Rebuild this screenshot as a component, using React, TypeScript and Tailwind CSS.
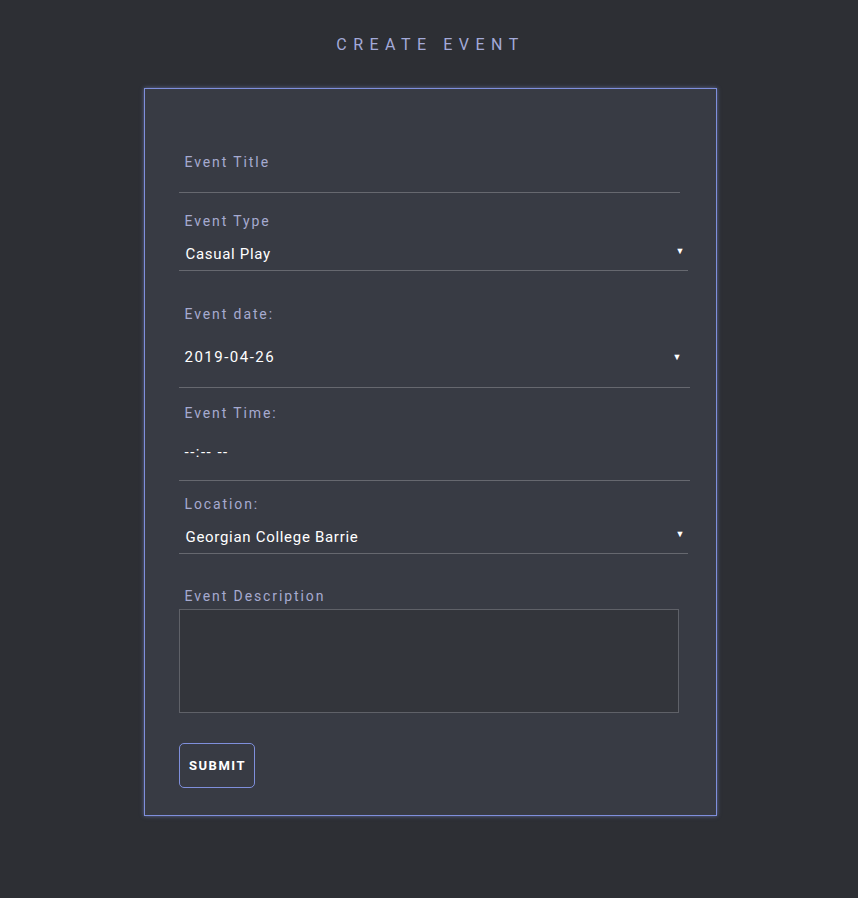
import React from 'react';

const Arrow = ({ className = '' }: { className?: string }) => (
  <span className={`text-[9px] leading-none text-white ${className}`}>▼</span>
);

export default function App() {
  return (
    <div className="min-h-[898px] w-full bg-[#2d2f34] font-['Roboto','Liberation_Sans',sans-serif]">
      <div className="flex flex-col items-center pt-[35px]">
        <h1 className="h-[20px] pl-[3px] text-[16px] leading-[20px] tracking-[6.5px] text-[#a3aad9]">CREATE EVENT</h1>

        <form className="ml-[2px] mt-[33px] w-[573px] border border-[#7f8fdc] bg-[#383b44] pb-[27px] pl-[34px] pr-[26px] pt-[63px] shadow-[0_0_4px_rgba(127,143,220,0.6)]">
          {/* Event Title */}
          <label className="block h-[20px] pl-[6px] text-[14px] leading-[20px] tracking-[1.9px] text-[#a6aad0]">Event Title</label>
          <div className="h-[21px] w-[501px] border-b border-[#66686f]" />

          {/* Event Type */}
          <label className="mt-[18px] block h-[20px] pl-[6px] text-[14px] leading-[20px] tracking-[1.9px] text-[#a6aad0]">Event Type</label>
          <div className="flex h-[40px] w-[509px] items-start justify-between border-b border-[#66686f] pl-[7px] pr-[3px] pt-[13px]">
            <span className="text-[15px] leading-[20px] tracking-[0.7px] text-white">Casual Play</span>
            <Arrow className="mt-[3px]" />
          </div>

          {/* Event date */}
          <label className="mt-[33px] block h-[20px] pl-[6px] text-[14px] leading-[20px] tracking-[1.9px] text-[#a6aad0]">Event date:</label>
          <div className="flex h-[64px] w-[511px] items-start justify-between border-b border-[#66686f] pl-[6px] pr-[8px] pt-[23px]">
            <span className="text-[15px] leading-[20px] tracking-[1.5px] text-white">2019-04-26</span>
            <Arrow className="mt-[6px] text-[8px]" />
          </div>

          {/* Event Time */}
          <label className="mt-[15px] block h-[20px] pl-[6px] text-[14px] leading-[20px] tracking-[1.9px] text-[#a6aad0]">Event Time:</label>
          <div className="h-[58px] w-[511px] border-b border-[#66686f] pl-[6px] pt-[17px]">
            <span className="text-[15px] leading-[20px] tracking-[1.5px] text-white">--:-- --</span>
          </div>

          {/* Location */}
          <label className="mt-[13px] block h-[20px] pl-[6px] text-[14px] leading-[20px] tracking-[1.9px] text-[#a6aad0]">Location:</label>
          <div className="flex h-[40px] w-[509px] items-start justify-between border-b border-[#66686f] pl-[7px] pr-[3px] pt-[13px]">
            <span className="text-[15px] leading-[20px] tracking-[0.7px] text-white">Georgian College Barrie</span>
            <Arrow className="mt-[3px]" />
          </div>

          {/* Event Description */}
          <label className="mt-[32px] block h-[20px] pl-[6px] text-[14px] leading-[20px] tracking-[1.9px] text-[#a6aad0]">Event Description</label>
          <div className="mt-[3px] h-[104px] w-[500px] border border-[#5f6168] bg-[#33353b]" />

          <button
            type="button"
            className="mt-[30px] flex h-[45px] w-[76px] items-center justify-center rounded-[5px] border border-[#7f8fdc] pl-[2px] text-[13px] font-bold tracking-[1.5px] text-white"
          >
            SUBMIT
          </button>
        </form>
      </div>
    </div>
  );
}
